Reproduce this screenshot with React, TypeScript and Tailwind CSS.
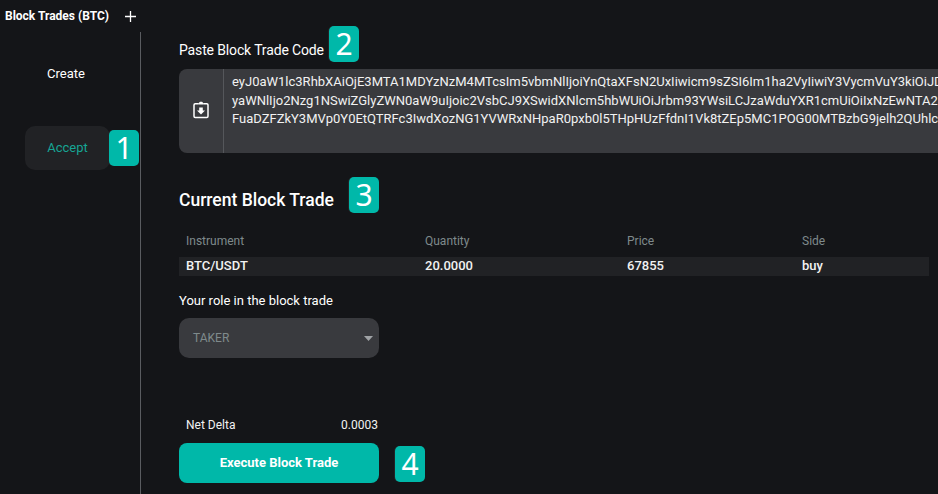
import React from "react";

function Badge({ n, className }: { n: string; className: string }) {
  return (
    <div className={"absolute flex h-9 w-[30px] items-center justify-center rounded-[5px] bg-[#00b8a9] text-[30px] leading-none text-white shadow-[-1px_0_0_#222326] font-['Noto_Sans',sans-serif] " + className}>
      {n}
    </div>
  );
}

function ClipIcon() {
  return (
    <svg className="mb-[2px]" width="16" height="18" viewBox="0 0 16 18" fill="none">
      <path d="M5.500 2.800H2.200C1.500 2.800 1 3.300 1 4v11.300c0 .7.500 1.200 1.200 1.200h11.600c.7 0 1.200-.5 1.200-1.200V4c0-.7-.5-1.200-1.200-1.200h-3.300" stroke="#fff" strokeWidth="1.500" />
      <path d="M5.500 3.500V2.200L7 .8h2l1.500 1.400v1.300z" fill="#fff" />
      <path d="M6.200 6.500h3.600v3h2.200L8 13.600 4 9.500h2.200z" fill="#fff" />
    </svg>
  );
}

export default function App() {
  return (
    <div className="relative flex h-[494px] w-[938px] flex-col overflow-hidden bg-[#141518] font-['Roboto',sans-serif] text-white">
      <header className="flex h-8 shrink-0 items-center pl-[5px]">
        <span className="text-xs font-bold">Block Trades (BTC)</span>
        <svg className="ml-[16px]" width="11" height="11" viewBox="0 0 11 11" fill="none">
          <path d="M5.500 0v11M0 5.500h11" stroke="#fff" strokeWidth="1.300" />
        </svg>
      </header>
      <div className="flex min-h-0 flex-1">
        <aside className="flex w-[141px] shrink-0 flex-col items-start border-r border-[#5a5c60] pl-[25px]">
          <div className="mt-[32px] flex h-[20px] w-[82px] items-center justify-center text-[13px] text-white">Create</div>
          <div className="mt-[42px] flex h-[44px] w-[85px] items-center justify-center rounded-[10px] bg-[#212225] text-[13px] text-[#16a594]">Accept</div>
        </aside>
        <main className="min-w-0 flex-1 pl-[38px]">
          <div className="mt-[10px] h-[17px] text-sm leading-[17px] tracking-[-0.14px] text-white">Paste Block Trade Code</div>
          <div className="mt-[10px] flex h-[84px] w-[800px] overflow-hidden rounded-l-[8px] bg-[#393a3e]">
            <div className="flex w-[45px] shrink-0 items-center justify-center border-r border-[#55575b]">
              <ClipIcon />
            </div>
            <div className="whitespace-nowrap pl-[8px] pt-[4px] text-[13px] leading-[18.5px] text-[#f2f2f2]">
              <div>eyJ0aW1lc3RhbXAiOjE3MTA1MDYzNzM4MTcsIm5vbmNlIjoiYnQtaXFsN2UxIiwicm9sZSI6Im1ha2VyIiwiY3VycmVuY3kiOiJDIn0</div>
              <div>yaWNlIjo2Nzg1NSwiZGlyZWN0aW9uIjoic2VsbCJ9XSwidXNlcm5hbWUiOiJrbm93YWsiLCJzaWduYXR1cmUiOiIxNzEwNTA2</div>
              <div>FuaDZFZkY3MVp0Y0EtQTRFc3IwdXozNG1YVWRxNHpaR0pxb0l5THpHUzFfdnI1Vk8tZEp5MC1POG00MTBzbG9jelh2QUhlcyJ9</div>
            </div>
          </div>
          <h2 className="mt-[36px] h-[22px] text-[17.5px] font-medium leading-[22px] text-white">Current Block Trade</h2>
          <div className="mt-[21px] w-[750px] text-xs">
            <div className="flex h-[18px] items-center text-[#7f8a8c]">
              <span className="w-[246px] pl-[7px]">Instrument</span>
              <span className="w-[202px]">Quantity</span>
              <span className="w-[175px]">Price</span>
              <span>Side</span>
            </div>
            <div className="mt-[7px] flex h-[19px] items-center bg-[#212225] pb-[1px] text-[13px] font-medium text-[#f2f2f2]">
              <span className="w-[246px] pl-[7px]">BTC/USDT</span>
              <span className="w-[202px]">20.0000</span>
              <span className="w-[175px]">67855</span>
              <span>buy</span>
            </div>
          </div>
          <div className="mt-[17px] h-[15px] text-[13px] leading-[15px] text-white">Your role in the block trade</div>
          <div className="mt-[10px] flex h-10 w-[200px] items-center justify-between rounded-[10px] bg-[#393a3e] pl-[14px] pr-[6px] text-xs text-[#7f8a8c]">
            <span>TAKER</span>
            <svg width="9" height="5" viewBox="0 0 9 5"><path d="M0 0h9L4.500 5z" fill="#a0a3a6" /></svg>
          </div>
          <div className="mt-[58px] flex h-[18px] w-[200px] items-center justify-between pl-[7px] pr-[1px] text-xs text-[#f2f2f2]">
            <span>Net Delta</span>
            <span>0.0003</span>
          </div>
          <button className="mt-[9px] flex h-10 w-[200px] items-center justify-center rounded-[8px] bg-[#00b8a9] text-[13px] font-bold text-white">
            Execute Block Trade
          </button>
        </main>
      </div>
      <Badge n="1" className="left-[109px] top-[130px]" />
      <Badge n="2" className="left-[329px] top-[26px]" />
      <Badge n="3" className="left-[349px] top-[177px]" />
      <Badge n="4" className="left-[395px] top-[446px]" />
    </div>
  );
}
